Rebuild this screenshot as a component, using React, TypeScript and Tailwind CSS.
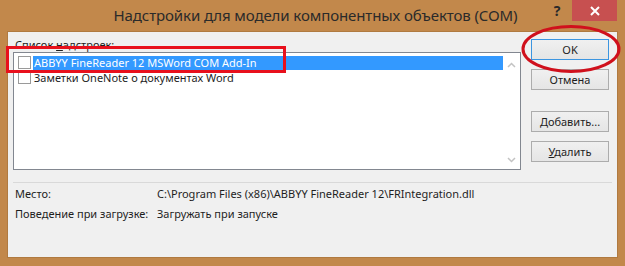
import React from 'react';

const font = { fontFamily: '"Noto Sans", "Open Sans", Arial, sans-serif' };

const DialogButton: React.FC<{ label: React.ReactNode; focused?: boolean }> = ({ label, focused }) => (
  <button
    className={
      'w-[78px] h-[21px] text-[11px] leading-none text-[#1e1e1e] bg-gradient-to-b from-[#f0f0f0] to-[#e5e5e5] border ' +
      (focused ? 'border-[#3c95e0]' : 'border-[#acacac]')
    }
  >
    {label}
  </button>
);

const Checkbox: React.FC = () => (
  <span className="w-[13px] h-[13px] bg-white border border-[#9a9a9a] shrink-0" />
);

export default function App() {
  return (
    <div className="w-[625px] h-[266px] bg-[#c2884b] flex flex-col relative overflow-hidden" style={font}>
      {/* Title bar */}
      <div className="h-[31px] flex items-center justify-center pl-[6px]">
        <span className="text-[15px] text-[#2a2a2a] tracking-[-0.1px]">
          Надстройки для модели компонентных объектов (COM)
        </span>
      </div>
      <div className="absolute top-0 right-[8px] flex items-start">
        <span className="w-[30px] h-[21px] flex items-center justify-center text-[14px] font-bold text-[#2a2a2a]">?</span>
        <span className="w-[45px] h-[21px] bg-[#c75050] flex items-center justify-center">
          <svg width="10" height="10" viewBox="0 0 10 10">
            <path d="M1 1 L9 9 M9 1 L1 9" stroke="#fff" strokeWidth="2" />
          </svg>
        </span>
      </div>

      {/* Client area */}
      <div className="flex-1 mx-[7px] mb-[8px] bg-[#f0f0f0] border border-[#b07a40] flex flex-col px-[5px] text-[11px] text-[#1e1e1e]">
        <div className="flex gap-[10px] pt-[6px]">
          <div className="flex-1 flex flex-col">
            <div className="h-[14px] leading-[14px] pl-[2px]">
              Список <span className="underline">н</span>адстроек:
            </div>
            <div className="h-[118px] bg-white border border-[#828790] flex pt-[2px] pl-[4px]">
              <div className="flex-1 flex flex-col">
                <div className="h-[15px] flex items-center">
                  <Checkbox />
                  <span className="flex-1 h-[14px] ml-[2px] bg-[#3399ff] text-white leading-[14px] pl-[1px]">
                    ABBYY FineReader 12 MSWord COM Add-In
                  </span>
                </div>
                <div className="h-[15px] flex items-center">
                  <Checkbox />
                  <span className="ml-[2px] leading-[14px] pl-[1px]">Заметки OneNote о документах Word</span>
                </div>
              </div>
              <div className="w-[17px] flex flex-col justify-between items-center pt-[7px] pb-[6px]">
                <svg width="9" height="6" viewBox="0 0 9 6">
                  <path d="M1 5 L4.5 1.5 L8 5" stroke="#c3c3c3" strokeWidth="1.5" fill="none" />
                </svg>
                <svg width="9" height="6" viewBox="0 0 9 6">
                  <path d="M1 1 L4.5 4.5 L8 1" stroke="#c3c3c3" strokeWidth="1.5" fill="none" />
                </svg>
              </div>
            </div>
          </div>
          <div className="w-[78px] flex flex-col gap-[9px] pt-[1px] mr-[3px]">
            <DialogButton label="OK" focused />
            <DialogButton label="Отмена" />
            <div className="h-[3px]" />
            <DialogButton label={<><span className="underline">Д</span>обавить...</>} />
            <DialogButton label={<><span className="underline">У</span>далить</>} />
          </div>
        </div>

        <div className="h-px bg-[#d9d9d9] mt-[12px]" />

        <div className="grid grid-cols-[142px_1fr] gap-y-[6px] pt-[4px] pl-[2px] leading-[14px] whitespace-nowrap">
          <span>Место:</span>
          <span>C:\Program Files (x86)\ABBYY FineReader 12\FRIntegration.dll</span>
          <span>Поведение при загрузке:</span>
          <span>Загружать при запуске</span>
        </div>
      </div>

      {/* Annotations */}
      <div className="absolute left-[6px] top-[46px] w-[280px] h-[27px] border-[3px] border-[#e8101c]" />
      <svg className="absolute left-[521px] top-[24px]" width="100" height="50" viewBox="0 0 100 50">
        <ellipse cx="50" cy="25" rx="48" ry="22.5" stroke="#d0101c" strokeWidth="3" fill="none" />
      </svg>
    </div>
  );
}
